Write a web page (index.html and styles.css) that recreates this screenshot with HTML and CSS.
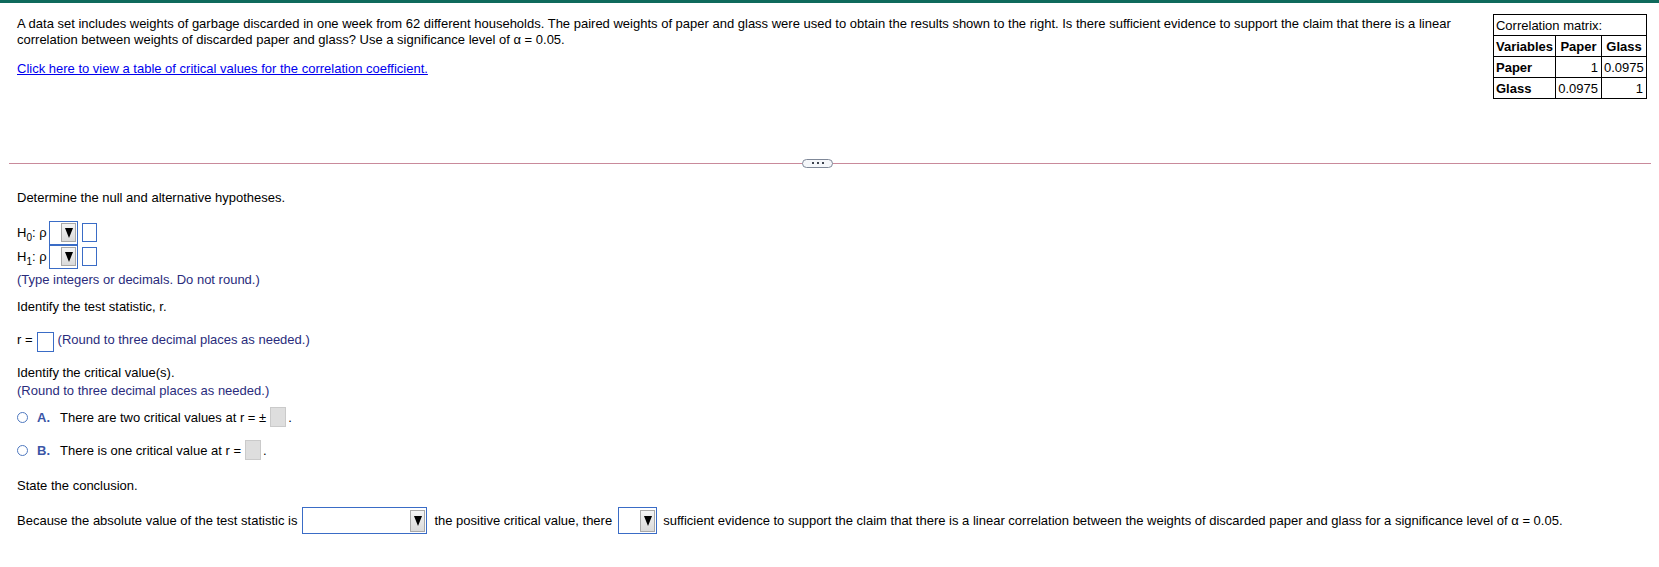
FILE: index.html
```html
<!DOCTYPE html>
<html>
<head>
<meta charset="utf-8">
<title>Correlation question</title>
<link rel="stylesheet" href="styles.css">
</head>
<body>
<div class="topbar"></div>
<header class="question">
  <div class="stem">
    <p class="intro">A data set includes weights of garbage discarded in one week from 62 different households. The paired weights of paper and glass were used to obtain the results shown to the right. Is there sufficient evidence to support the claim that there is a linear correlation between weights of discarded paper and glass? Use a significance level of α = 0.05.</p>
    <p class="link-line"><a href="#" class="link">Click here to view a table of critical values for the correlation coefficient.</a></p>
  </div>
  <table class="matrix">
    <colgroup><col class="c1"><col class="c2"><col class="c3"></colgroup>
    <tr><td colspan="3" class="cap">Correlation matrix:</td></tr>
    <tr><th>Variables</th><th>Paper</th><th>Glass</th></tr>
    <tr><th>Paper</th><td class="num">1</td><td class="num">0.0975</td></tr>
    <tr><th>Glass</th><td class="num">0.0975</td><td class="num">1</td></tr>
  </table>
</header>

<div class="divider"><span class="more"><i></i><i></i><i></i></span></div>

<main class="work">
  <p class="line determine">Determine the null and alternative hypotheses.</p>

  <div class="hyp first">
    <span class="hlabel">H<sub>0</sub>: ρ</span>
    <span class="dd dd-sm"><span class="ddbtn"><b></b></span></span>
    <span class="ibox"></span>
  </div>
  <div class="hyp">
    <span class="hlabel">H<sub>1</sub>: ρ</span>
    <span class="dd dd-sm"><span class="ddbtn"><b></b></span></span>
    <span class="ibox"></span>
  </div>
  <p class="line hint type-hint">(Type integers or decimals. Do not round.)</p>

  <p class="line test-stat">Identify the test statistic, r.</p>
  <div class="rrow">
    <span class="line">r =</span>
    <span class="ibox rbox"></span>
    <span class="line hint">(Round to three decimal places as needed.)</span>
  </div>

  <p class="line crit">Identify the critical value(s).</p>
  <p class="line hint crit-hint">(Round to three decimal places as needed.)</p>

  <div class="opt opt-a">
    <span class="radio"></span>
    <span class="olabel">A.</span>
    <span>There are two critical values at r = ±</span>
    <span class="gbox"></span>
    <span class="dot">.</span>
  </div>
  <div class="opt opt-b">
    <span class="radio"></span>
    <span class="olabel">B.</span>
    <span>There is one critical value at r =</span>
    <span class="gbox"></span>
    <span class="dot">.</span>
  </div>

  <p class="line state">State the conclusion.</p>
  <div class="concl">
    <span>Because the absolute value of the test statistic is</span>
    <span class="dd dd-lg"><span class="ddbtn"><b></b></span></span>
    <span>the positive critical value, there</span>
    <span class="dd dd-md"><span class="ddbtn"><b></b></span></span>
    <span>sufficient evidence to support the claim that there is a linear correlation between the weights of discarded paper and glass for a significance level of α = 0.05.</span>
  </div>
</main>
</body>
</html>
```

FILE: styles.css
```css
html, body {
  margin: 0;
  padding: 0;
  background: #ffffff;
}
body {
  font-family: "Liberation Sans", Arial, sans-serif;
  font-size: 13px;
  line-height: 15px;
  color: #000000;
}
p { margin: 0; }

.topbar {
  height: 3px;
  background: #0f6a5c;
}

.question {
  display: flex;
  align-items: flex-start;
  justify-content: space-between;
  padding: 11px 12px 0 17px;
}
.stem {
  width: 1463px;
  padding-top: 1.8px;
}
.intro { line-height: 16px; }
.link-line { margin-top: 13.7px; line-height: 16px; }
.link {
  color: #0000ee;
  text-decoration: underline;
}

.matrix {
  border-collapse: collapse;
  table-layout: fixed;
  width: 153px;
  border: 1px solid #000;
}
.matrix col.c1 { width: 62px; }
.matrix col.c2 { width: 46px; }
.matrix col.c3 { width: 45px; }
.matrix td, .matrix th {
  border: 1px solid #000;
  padding: 0 2px;
  height: 20px;
  line-height: 15px;
  white-space: nowrap;
  font-size: 13px;
}
.matrix th { font-weight: bold; text-align: left; }
.matrix tr:nth-child(2) th:not(:first-child) { text-align: center; }
.matrix .cap { text-align: left; font-weight: normal; }
.matrix .num { text-align: right; padding-right: 3px; }

.divider {
  margin: 59.5px 8px 0 9px;
  height: 9px;
  display: flex;
  align-items: center;
  background: linear-gradient(#c98a9b, #c98a9b) left center / 100% 1px no-repeat;
}
.more {
  margin-left: 793px;
  width: 31px;
  height: 9px;
  box-sizing: border-box;
  border: 1px solid #7f8898;
  border-radius: 5px;
  background: #f5f7fa;
  display: flex;
  align-items: center;
  justify-content: center;
  gap: 3px;
}
.more i {
  width: 2px;
  height: 2px;
  background: #3d4450;
}

.work { padding-left: 17px; }
.line { line-height: 15px; }
.hint { color: #2a2c7c; }

.determine { margin-top: 22px; }

.hyp {
  display: flex;
  align-items: center;
  height: 24px;
}
.hyp.first { margin-top: 16.4px; }
.hlabel { width: 32px; }
.hlabel sub {
  font-size: 10px;
  line-height: 0;
  vertical-align: -4px;
}

.dd {
  box-sizing: border-box;
  border: 1px solid #3a6cc6;
  display: flex;
  align-items: center;
  justify-content: flex-end;
  padding-right: 1px;
  background: #fff;
}
.dd-sm { width: 29px; height: 24px; }
.dd-lg { width: 125px; height: 27px; margin: 0 7px 0 5px; }
.dd-md { width: 39px; height: 27px; margin: 0 6px 0 6px; }
.ddbtn {
  box-sizing: border-box;
  width: 15px;
  height: 19px;
  border: 1px solid #a8a8a8;
  background: linear-gradient(#f4f4f4, #dadada);
  display: flex;
  align-items: center;
  justify-content: center;
}
.dd-lg .ddbtn, .dd-md .ddbtn { height: 22px; }
.ddbtn b {
  width: 0;
  height: 0;
  border-left: 4.5px solid transparent;
  border-right: 4.5px solid transparent;
  border-top: 10px solid #000;
}

.ibox {
  box-sizing: border-box;
  width: 15px;
  height: 19px;
  border: 1px solid #3a6cc6;
  background: #fff;
  margin-left: 4px;
}

.type-hint { margin-top: 3px; }
.test-stat { margin-top: 12.6px; }

.rrow {
  display: flex;
  align-items: flex-start;
  margin-top: 17.4px;
  height: 20px;
}
.rbox {
  width: 17px;
  height: 20px;
  margin: 0 4px 0 4px;
}

.crit { margin-top: 13px; }
.crit-hint { margin-top: 3px; }

.opt {
  display: flex;
  align-items: center;
  height: 20px;
}
.opt-a { margin-top: 9.4px; }
.opt-b { margin-top: 13px; }
.radio {
  box-sizing: border-box;
  width: 11px;
  height: 11px;
  border-radius: 50%;
  border: 1px solid #4f79c0;
  background: #fff;
  margin-right: 9px;
}
.olabel {
  width: 23px;
  font-weight: bold;
  color: #3b55a6;
}
.gbox {
  box-sizing: border-box;
  width: 16px;
  height: 20px;
  background: #dedede;
  border: 1px solid #cacaca;
  margin-left: 4px;
}
.dot { margin-left: 2px; }

.state { margin-top: 18px; }

.concl {
  display: flex;
  align-items: center;
  height: 27px;
  margin-top: 14px;
  white-space: nowrap;
}
```
